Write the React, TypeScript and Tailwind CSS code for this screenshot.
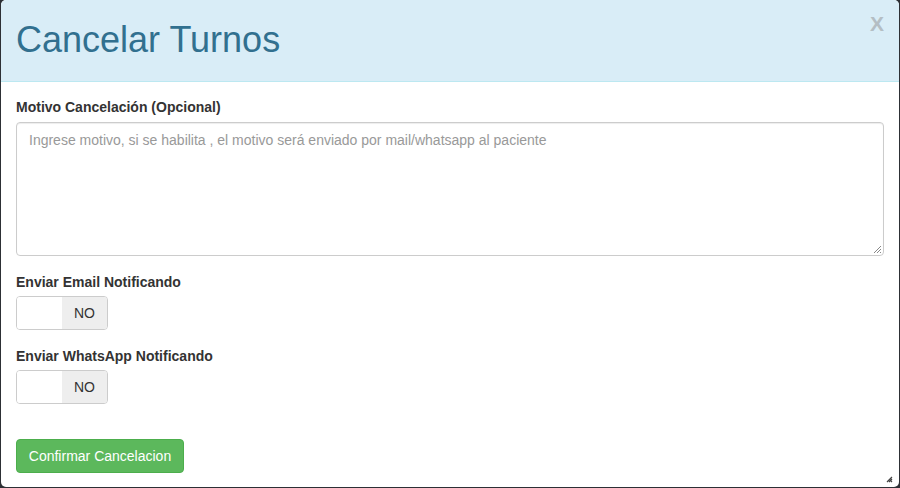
export default function App() {
  return (
    <div className="h-[488px] w-[900px] overflow-hidden bg-[#2d3035] px-px font-['Liberation_Sans',Arial,sans-serif]">
      <div className="relative flex h-[487px] flex-col overflow-hidden rounded-[5px] bg-white">
        {/* Header */}
        <div className="flex h-[82px] shrink-0 items-center justify-between border-b border-[#bce8f1] bg-[#d9edf7] pl-[15px] pr-[15px]">
          <h4 className="mt-[-2px] text-[36px] leading-none text-[#31708f]">Cancelar Turnos</h4>
          <button className="mb-[34px] text-[21px] font-bold leading-none text-[#b4bec4]">X</button>
        </div>

        {/* Body */}
        <div className="flex flex-col px-[15px] pt-[16px]">
          <label className="text-[14px] font-bold leading-[18px] text-[#333]">Motivo Cancelación (Opcional)</label>
          <div className="relative mt-[6px]">
            <textarea
              className="block h-[134px] w-full resize-none rounded-[4px] border border-[#ccc] px-[12px] py-[7px] text-[14px] leading-[20px] text-[#555] shadow-[inset_0_1px_1px_rgba(0,0,0,0.075)] outline-none placeholder:text-[#999]"
              placeholder="Ingrese motivo, si se habilita , el motivo será enviado por mail/whatsapp al paciente"
            />
            <svg className="absolute bottom-[2px] right-[2px]" width="9" height="9" viewBox="0 0 9 9">
              <path d="M8 1 L1 8 M8 4 L4 8 M8 7 L7 8" stroke="#888" strokeWidth="1" />
            </svg>
          </div>

          <label className="mt-[17px] text-[14px] font-bold leading-[18px] text-[#333]">Enviar Email Notificando</label>
          <Toggle />

          <label className="mt-[17px] text-[14px] font-bold leading-[18px] text-[#333]">Enviar WhatsApp Notificando</label>
          <Toggle />

          <button className="mt-[35px] h-[34px] w-[168px] rounded-[4px] border border-[#4cae4c] bg-[#5cb85c] text-[14px] text-white">
            Confirmar Cancelacion
          </button>
        </div>

        <svg className="absolute bottom-[4px] right-[6px]" width="7" height="7" viewBox="0 0 7 7">
          <path d="M6 1 L1 6 M6 3 L3 6 M6 5 L5 6" stroke="#444" strokeWidth="1.2" />
        </svg>
      </div>
    </div>
  );
}

function Toggle() {
  return (
    <div className="mt-[5px] flex h-[34px] w-[92px] overflow-hidden rounded-[4px] border border-[#ccc]">
      <div className="w-[45px] bg-white" />
      <div className="flex flex-1 items-center justify-center bg-[#eee] text-[14px] text-[#333]">NO</div>
    </div>
  );
}
